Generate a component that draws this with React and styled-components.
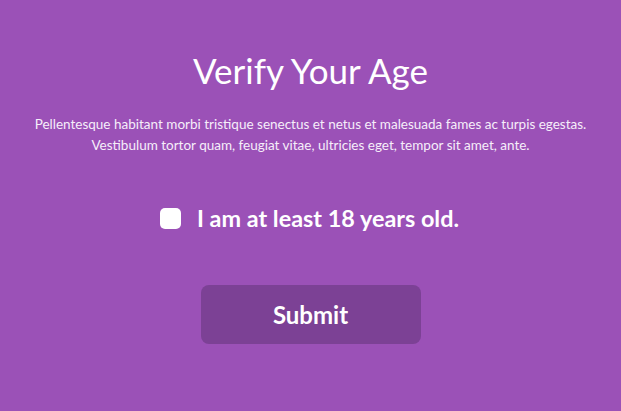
import React from "react";
import styled, { createGlobalStyle } from "styled-components";

const Global = createGlobalStyle`
  html, body { margin: 0; padding: 0; background: #9b51b7; }
  body { font-family: Lato, "Open Sans", sans-serif; color: #fff; }
`;

const Page = styled.main`
  width: 621px;
  height: 411px;
  box-sizing: border-box;
  background: #9b51b7;
  display: flex;
  flex-direction: column;
  align-items: center;
  padding-top: 44px;
`;

const Title = styled.h1`
  margin: 0;
  font-size: 35px;
  font-weight: 400;
  line-height: 52px;
  color: #fff;
`;

const Text = styled.p`
  margin: 18px 0 0;
  font-size: 13.5px;
  line-height: 21px;
  text-align: center;
  color: #f6eefa;
`;

const CheckRow = styled.label`
  display: flex;
  align-items: center;
  gap: 16px;
  margin-top: 47px;
  margin-left: -2px;
  font-size: 23.4px;
  font-weight: 700;
  line-height: 30px;
  cursor: pointer;
`;

const Box = styled.span`
  width: 21px;
  height: 21px;
  border-radius: 5px;
  background: #fff;
  display: inline-block;
`;

const Button = styled.button`
  margin-top: 52px;
  width: 220px;
  height: 59px;
  border: none;
  border-radius: 8px;
  background: #7c4195;
  color: #fff;
  font-family: Lato, "Open Sans", sans-serif;
  font-size: 24px;
  font-weight: 700;
  cursor: pointer;
`;

export default function App() {
  return (
    <>
      <Global />
      <Page>
        <Title>Verify Your Age</Title>
        <Text>
          Pellentesque habitant morbi tristique senectus et netus et malesuada fames ac turpis egestas.
          <br />
          Vestibulum tortor quam, feugiat vitae, ultricies eget, tempor sit amet, ante.
        </Text>
        <CheckRow>
          <Box />
          I am at least 18 years old.
        </CheckRow>
        <Button>Submit</Button>
      </Page>
    </>
  );
}
